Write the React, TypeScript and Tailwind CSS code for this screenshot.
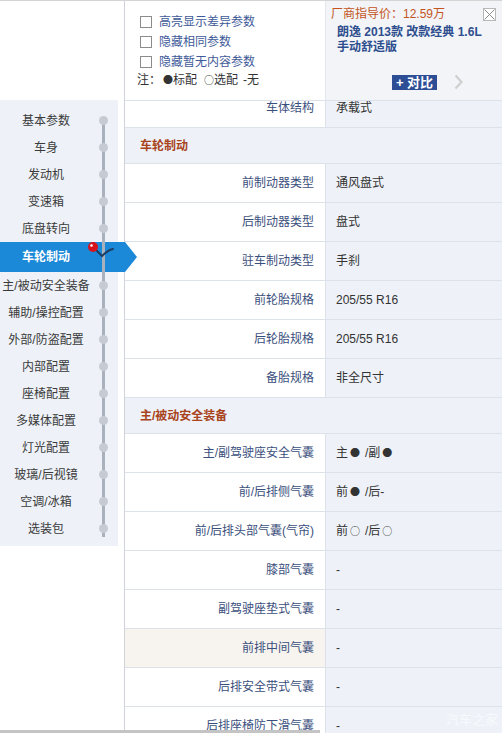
import React from 'react';

const navItems = ['基本参数','车身','发动机','变速箱','底盘转向','车轮制动','主/被动安全装备','辅助/操控配置','外部/防盗配置','内部配置','座椅配置','多媒体配置','灯光配置','玻璃/后视镜','空调/冰箱','选装包'];

type Row = { kind: 'section'; title: string } | { kind: 'row'; label: string; value: string; hl?: boolean };

const rows: Row[] = [
  { kind: 'section', title: '车轮制动' },
  { kind: 'row', label: '前制动器类型', value: '通风盘式' },
  { kind: 'row', label: '后制动器类型', value: '盘式' },
  { kind: 'row', label: '驻车制动类型', value: '手刹' },
  { kind: 'row', label: '前轮胎规格', value: '205/55 R16' },
  { kind: 'row', label: '后轮胎规格', value: '205/55 R16' },
  { kind: 'row', label: '备胎规格', value: '非全尺寸' },
  { kind: 'section', title: '主/被动安全装备' },
  { kind: 'row', label: '主/副驾驶座安全气囊', value: '主● /副●' },
  { kind: 'row', label: '前/后排侧气囊', value: '前● /后-' },
  { kind: 'row', label: '前/后排头部气囊(气帘)', value: '前○ /后○' },
  { kind: 'row', label: '膝部气囊', value: '-' },
  { kind: 'row', label: '副驾驶座垫式气囊', value: '-' },
  { kind: 'row', label: '前排中间气囊', value: '-', hl: true },
  { kind: 'row', label: '后排安全带式气囊', value: '-' },
  { kind: 'row', label: '后排座椅防下滑气囊', value: '-' },
];

function Sym({ text }: { text: string }) {
  if (!/[●○]/.test(text)) return <span>{text}</span>;
  const parts = text.split(/([●○ ])/).filter((p) => p !== '');
  return (
    <span className="flex items-center">
      {parts.map((p, i) =>
        p === '●' || p === '○' ? (
          <span key={i} className="ml-[2px] inline-block font-['Noto_Sans_CJK_SC',sans-serif] text-[10px] leading-[10px]">{p}</span>
        ) : p === ' ' ? (
          <span key={i} className="inline-block w-[5px]" />
        ) : (
          <span key={i}>{p}</span>
        )
      )}
    </span>
  );
}

function Checkbox({ label }: { label: string }) {
  return (
    <div className="flex h-[20px] items-center">
      <span className="mr-[7px] h-[12px] w-[12px] border border-[#8c8c8c] bg-white" />
      <span className="text-[#3e5a99]">{label}</span>
    </div>
  );
}

export default function App() {
  return (
    <div className="relative flex h-[733px] w-[502px] overflow-hidden border-t border-[#d4d4d4] bg-white font-['Liberation_Sans','Noto_Sans_CJK_SC',sans-serif] text-[12px] leading-[18px] text-[#333]">
      {/* left nav column */}
      <div className="w-[124px] shrink-0 pt-[99px]">
        <div className="relative w-[118px] bg-[#eef2f8] pb-[4px] pt-[7px]">
          <div className="absolute left-[102px] top-[18px] bottom-[9px] z-20 w-[3px] bg-[#a9b1bc]" />
          {navItems.map((item) => {
            const active = item === '车轮制动';
            return (
              <div key={item} className={`relative flex items-center ${active ? 'h-[30px]' : 'h-[27px]'}`}>
                {active && (
                  <div className="absolute left-0 top-0 z-10 h-[30px] w-[137px] bg-[#1b89d8] [clip-path:polygon(0_0,125px_0,137px_50%,125px_100%,0_100%)]" />
                )}
                <span className={`relative z-30 w-[92px] text-center ${active ? 'font-bold text-white' : 'text-[#3a3a3a]'}`}>{item}</span>
                {!active && (
                  <span className="relative z-30 ml-[7px] h-[9px] w-[9px] rounded-full bg-[#c6cbd3]" />
                )}
                {active && (
                  <svg className="absolute left-[86px] top-[-2px] z-30" width="30" height="22" viewBox="0 0 30 22">
                    <path d="M9 9 L16 16 C19 13 22 10 27 9" fill="none" stroke="#1d3d63" strokeWidth="2" strokeLinecap="round" />
                    <circle cx="7" cy="7" r="5" fill="#d8121c" />
                    <circle cx="5.5" cy="5.5" r="1.3" fill="#fff" />
                  </svg>
                )}
              </div>
            );
          })}
        </div>
      </div>

      {/* main column */}
      <div className="flex min-w-0 flex-1 flex-col border-l border-[#cfd3d9]">
        {/* header */}
        <div className="flex h-[100px] shrink-0 border-b border-[#dde2ea]">
          <div className="w-[201px] shrink-0 border-r border-[#e3e7ee] pl-[15px] pt-[11px]">
            <Checkbox label="高亮显示差异参数" />
            <Checkbox label="隐藏相同参数" />
            <Checkbox label="隐藏暂无内容参数" />
            <div className="-ml-[3px] flex h-[16px] items-center text-[#333]">
              <Sym text="注：●标配 ○选配 -无" />
            </div>
          </div>
          <div className="relative flex-1 bg-[#f2f4f8] pl-[5px] pt-[5px]">
            <div className="h-[16px] leading-[16px] text-[#c4541c]">厂商指导价：12.59万</div>
            <div className="ml-[6px] mt-[3px] font-bold leading-[15px] text-[#2e4e8e]">
              <div>朗逸 2013款 改款经典 1.6L</div>
              <div>手动舒适版</div>
            </div>
            <div className="ml-[61px] mt-[19px] flex items-center">
              <span className="flex h-[15px] w-[45px] items-center justify-center bg-[#2d4e94] text-[13px] font-bold leading-[15px] text-white">+ 对比</span>
              <svg className="ml-[17px]" width="9" height="16" viewBox="0 0 9 16">
                <path d="M1.5 1.5 L7.5 8 L1.5 14.5" fill="none" stroke="#cfcfcf" strokeWidth="2.2" />
              </svg>
            </div>
            <div className="absolute right-[6px] top-[7px] h-[13px] w-[13px] border border-[#b8b8b8] bg-white">
              <svg width="11" height="11" viewBox="0 0 11 11">
                <path d="M0.5 0.5 L10.5 10.5 M10.5 0.5 L0.5 10.5" stroke="#8a8a8a" strokeWidth="1" />
              </svg>
            </div>
          </div>
        </div>

        {/* partial row under header */}
        <div className="flex h-[27px] shrink-0 border-b border-[#dde2ea]">
          <div className="w-[201px] shrink-0 border-r border-[#dde2ea] pr-[11px] text-right leading-[14px] text-[#3b4f7d]">车体结构</div>
          <div className="flex-1 bg-[#eef2f8] pl-[10px] leading-[14px] text-[#333]">承载式</div>
        </div>

        {rows.map((r, i) =>
          r.kind === 'section' ? (
            <div key={i} className="flex h-[36px] shrink-0 items-center border-b border-[#dde2ea] bg-[#eef2f8] pl-[15px] font-bold text-[#a8431c]">
              {r.title}
            </div>
          ) : (
            <div key={i} className="flex h-[39px] shrink-0 border-b border-[#dde2ea]">
              <div className={`flex w-[201px] shrink-0 items-center justify-end border-r border-[#dde2ea] pr-[11px] text-[#3b4f7d] ${r.hl ? 'bg-[#f7f4ef]' : 'bg-white'}`}>
                {r.label}
              </div>
              <div className="flex flex-1 items-center bg-[#eef2f8] pl-[10px] text-[#333]">
                <Sym text={r.value} />
              </div>
            </div>
          )
        )}
      </div>

      <div className="absolute bottom-[4px] right-[4px] text-[13px] text-white/60">汽车之家</div>
      <div className="absolute bottom-0 left-0 h-[3px] w-[320px] bg-[#c4c4c4]" />
    </div>
  );
}
